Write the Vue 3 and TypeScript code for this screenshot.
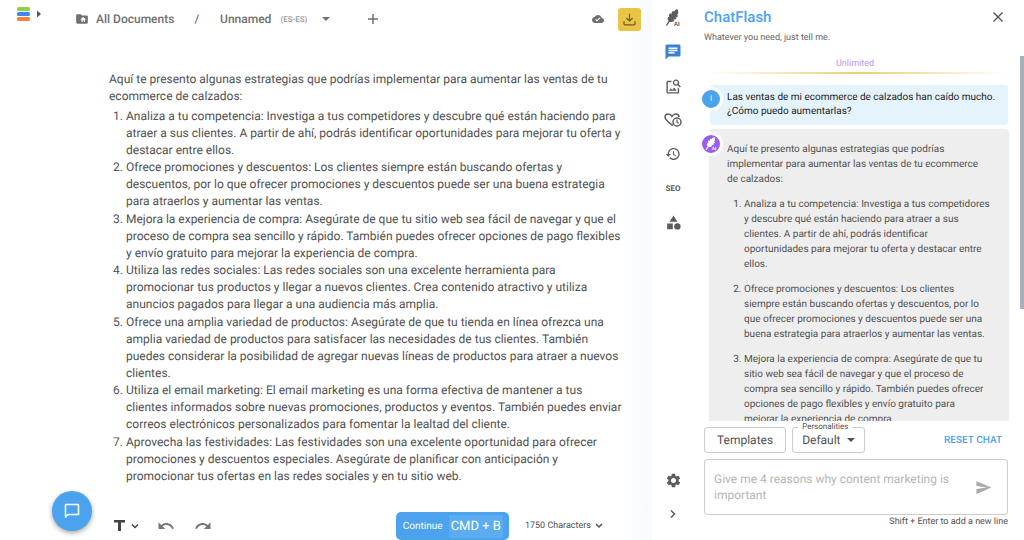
<script setup lang="ts">
import { ref } from 'vue'

const intro = `Aquí te presento algunas estrategias que podrías implementar para aumentar las ventas de tu
ecommerce de calzados:`

const strategies: string[] = [
  `Analiza a tu competencia: Investiga a tus competidores y descubre qué están haciendo para
atraer a sus clientes. A partir de ahí, podrás identificar oportunidades para mejorar tu oferta y
destacar entre ellos.`,
  `Ofrece promociones y descuentos: Los clientes siempre están buscando ofertas y
descuentos, por lo que ofrecer promociones y descuentos puede ser una buena estrategia
para atraerlos y aumentar las ventas.`,
  `Mejora la experiencia de compra: Asegúrate de que tu sitio web sea fácil de navegar y que el
proceso de compra sea sencillo y rápido. También puedes ofrecer opciones de pago flexibles
y envío gratuito para mejorar la experiencia de compra.`,
  `Utiliza las redes sociales: Las redes sociales son una excelente herramienta para
promocionar tus productos y llegar a nuevos clientes. Crea contenido atractivo y utiliza
anuncios pagados para llegar a una audiencia más amplia.`,
  `Ofrece una amplia variedad de productos: Asegúrate de que tu tienda en línea ofrezca una
amplia variedad de productos para satisfacer las necesidades de tus clientes. También
puedes considerar la posibilidad de agregar nuevas líneas de productos para atraer a nuevos
clientes.`,
  `Utiliza el email marketing: El email marketing es una forma efectiva de mantener a tus
clientes informados sobre nuevas promociones, productos y eventos. También puedes enviar
correos electrónicos personalizados para fomentar la lealtad del cliente.`,
  `Aprovecha las festividades: Las festividades son una excelente oportunidad para ofrecer
promociones y descuentos especiales. Asegúrate de planificar con anticipación y
promocionar tus ofertas en las redes sociales y en tu sitio web.`,
]

const question = `Las ventas de mi ecommerce de calzados han caído mucho.
¿Cómo puedo aumentarlas?`

const replyIntro = `Aquí te presento algunas estrategias que podrías
implementar para aumentar las ventas de tu ecommerce
de calzados:`

const replyItems: string[] = [
  `Analiza a tu competencia: Investiga a tus competidores
y descubre qué están haciendo para atraer a sus
clientes. A partir de ahí, podrás identificar
oportunidades para mejorar tu oferta y destacar entre
ellos.`,
  `Ofrece promociones y descuentos: Los clientes
siempre están buscando ofertas y descuentos, por lo
que ofrecer promociones y descuentos puede ser una
buena estrategia para atraerlos y aumentar las ventas.`,
  `Mejora la experiencia de compra: Asegúrate de que tu
sitio web sea fácil de navegar y que el proceso de
compra sea sencillo y rápido. También puedes ofrecer
opciones de pago flexibles y envío gratuito para
mejorar la experiencia de compra.`,
]

const message = ref('')
const personality = ref('Default')
</script>

<template>
  <div class="app">
    <main class="editor">
      <header class="topbar">
        <button class="icon-btn menu" aria-label="Menu">
          <svg width="26" height="14" viewBox="0 0 26 14">
            <rect x="0" y="0" width="13" height="4" rx="1.5" fill="#8bd346" />
            <rect x="0" y="5" width="13" height="4" rx="1.5" fill="#3f86f5" />
            <rect x="0" y="10" width="13" height="4" rx="1.5" fill="#f5813a" />
            <path d="M20 3.500l4 3.500-4 3.500z" fill="#555" />
          </svg>
        </button>
        <a href="#" class="crumb folder">
          <svg width="14" height="14" viewBox="0 0 24 24" fill="currentColor">
            <path fill-rule="evenodd" d="M20 6h-8l-2-2H4c-1.100 0-2 .9-2 2v12c0 1.100.9 2 2 2h16c1.100 0 2-.9 2-2V8c0-1.100-.9-2-2-2zM17 13v4h-2v-3h-2v3h-2v-4H9l5-4.500 5 4.500z" />
          </svg>
          <span>All Documents</span>
        </a>
        <span class="crumb slash">/</span>
        <button class="crumb name">
          <span>Unnamed</span>
          <small>(ES-ES)</small>
          <svg width="8" height="4" viewBox="0 0 8 4" fill="currentColor"><path d="M0 0h8L4 4z" /></svg>
        </button>
        <button class="icon-btn add" aria-label="New document">
          <svg width="12" height="12" viewBox="0 0 12 12" fill="none" stroke="currentColor" stroke-width="1.500"><path d="M6 1v10M1 6h10" /></svg>
        </button>
        <span class="grow"></span>
        <svg class="cloud" width="12" height="12" viewBox="0 0 24 24" fill="currentColor">
          <path d="M19.350 10.040C18.670 6.590 15.640 4 12 4 9.110 4 6.600 5.640 5.350 8.040 2.340 8.360 0 10.910 0 14c0 3.310 2.690 6 6 6h13c2.760 0 5-2.240 5-5 0-2.640-2.050-4.780-4.650-4.960zM10 17l-3.500-3.500 1.410-1.410L10 14.170 15.180 9l1.410 1.410L10 17z" />
        </svg>
        <button class="download" aria-label="Download">
          <svg width="13" height="13" viewBox="0 0 13 13" fill="none" stroke="currentColor" stroke-width="1.200" stroke-linecap="round" stroke-linejoin="round">
            <path d="M6.500 1v7M3.800 5.500l2.700 2.700 2.700-2.700M1 8.500v2.300q0 1 1 1h9q1 0 1-1V8.500" />
          </svg>
        </button>
      </header>

      <article class="document">
        <p>{{ intro }}</p>
        <ol>
          <li v-for="(item, i) in strategies" :key="i">{{ item }}</li>
        </ol>
      </article>

      <footer class="toolbar">
        <button class="icon-btn support" aria-label="Support chat">
          <svg width="16" height="16" viewBox="0 0 16 16" fill="none" stroke="currentColor" stroke-width="1.500" stroke-linejoin="round">
            <path d="M1.500 1.500h13v10H4l-2.500 2.600z" />
          </svg>
        </button>
        <button class="icon-btn type" aria-label="Text style">
          <svg width="26" height="12" viewBox="0 0 26 12">
            <path d="M0 0h11v2.500H7V11H4V2.500H0z" fill="#444" />
            <path d="M18 4.500l3 3 3-3" fill="none" stroke="#444" stroke-width="1.500" />
          </svg>
        </button>
        <button class="icon-btn undo" aria-label="Undo">
          <svg width="18" height="18" viewBox="0 0 24 24" fill="currentColor"><path d="M12.500 8c-2.650 0-5.050.99-6.900 2.600L2 7v9h9l-3.620-3.620c1.390-1.160 3.160-1.880 5.120-1.880 3.540 0 6.550 2.310 7.600 5.500l2.370-.78C21.080 11.030 17.150 8 12.500 8z" /></svg>
        </button>
        <button class="icon-btn redo" aria-label="Redo">
          <svg width="18" height="18" viewBox="0 0 24 24" fill="currentColor"><path d="M18.400 10.600C16.550 8.990 14.150 8 11.500 8c-4.650 0-8.580 3.030-9.960 7.220L3.900 16c1.050-3.190 4.050-5.500 7.600-5.500 1.950 0 3.730.72 5.120 1.880L13 16h9V7l-3.600 3.600z" /></svg>
        </button>
        <button class="continue"><span>Continue</span><kbd>CMD + B</kbd></button>
        <button class="count">
          <span>1750 Characters</span>
          <svg width="8" height="6" viewBox="0 0 8 6" fill="none" stroke="currentColor" stroke-width="1.500"><path d="M1 1l3 3 3-3" /></svg>
        </button>
      </footer>
    </main>

    <nav class="rail" aria-label="Tools">
      <button class="icon-btn" aria-label="AI writer">
        <svg width="16" height="18" viewBox="0 0 16 18">
          <path d="M12.500 0C11 .8 9.500.8 9 2.800L8.200 1.800C6.600 2.800 6.200 4 6.600 5.500L5.200 4.200C3.800 5.500 3.700 7 4.500 8.600L3 7.800C2.300 9.500 2.700 11 3.600 12L1 16.300l1 .7 2.800-4.300c2 .5 3.700 0 4.800-1.500l-1.700-.5c2 .1 3.300-.6 4-1.900L10 8.500c1.900 0 3-.9 3.300-2.200l-1.700.1C13.900 5 13.500 2.500 12.500 0z" fill="currentColor" />
          <text x="9" y="17" class="ai-text">AI</text>
        </svg>
      </button>
      <button class="icon-btn active" aria-label="Chat">
        <svg width="18" height="18" viewBox="0 0 24 24" fill="currentColor"><path d="M20 2H4c-1.100 0-1.990.9-1.990 2L2 22l4-4h14c1.100 0 2-.9 2-2V4c0-1.100-.9-2-2-2zM6 9h12v2H6V9zm8 5H6v-2h8v2zm4-6H6V6h12v2z" /></svg>
      </button>
      <button class="icon-btn" aria-label="Image search">
        <svg width="17" height="17" viewBox="0 0 24 24" fill="currentColor"><path d="M18 13v7H4V6h5.020c.05-.71.22-1.380.48-2H4c-1.100 0-2 .9-2 2v14c0 1.100.9 2 2 2h14c1.100 0 2-.9 2-2v-5l-2-2zm-1.500 5h-11l2.750-3.530 1.960 2.360 2.750-3.540L16.500 18zm2.800-9.110c.44-.7.7-1.510.7-2.390C20 4.010 17.990 2 15.500 2S11 4.010 11 6.500s2.010 4.500 4.490 4.500c.88 0 1.700-.26 2.390-.7L21 13.420 22.420 12 19.300 8.890zM15.500 9C14.120 9 13 7.880 13 6.500S14.120 4 15.500 4 18 5.120 18 6.500 16.880 9 15.500 9z" /></svg>
      </button>
      <button class="icon-btn" aria-label="Saved">
        <svg width="18" height="14" viewBox="0 0 18 14" fill="none" stroke="currentColor" stroke-width="1.500">
          <path d="M8.800 12.500C5 9.800 1 7 1 4.300 1 2.300 2.500 1 4.300 1 6 1 7.300 2 8 3.300 8.800 2 10 1 11.700 1 13.500 1 15 2.300 15 4" />
          <circle cx="13" cy="9" r="4" />
          <path d="M13 6.500V9.300l1.800 1" stroke-width="1.200" />
        </svg>
      </button>
      <button class="icon-btn" aria-label="History">
        <svg width="16" height="16" viewBox="0 0 24 24" fill="currentColor"><path d="M13 3c-4.970 0-9 4.030-9 9H1l3.890 3.890.07.14L9 12H6c0-3.870 3.130-7 7-7s7 3.130 7 7-3.130 7-7 7c-1.930 0-3.680-.79-4.940-2.060l-1.420 1.420C8.270 19.990 10.510 21 13 21c4.970 0 9-4.030 9-9s-4.030-9-9-9zm-1 5v5l4.280 2.540.72-1.210-3.500-2.080V8H12z" /></svg>
      </button>
      <button class="icon-btn seo">SEO</button>
      <button class="icon-btn" aria-label="Categories">
        <svg width="17" height="17" viewBox="0 0 24 24" fill="currentColor"><path d="M12 2l-5.500 9h11zM3 13.500h8v8H3z" /><circle cx="17.500" cy="17.500" r="4.500" /></svg>
      </button>
      <span class="grow"></span>
      <button class="icon-btn" aria-label="Settings">
        <svg width="17" height="17" viewBox="0 0 24 24" fill="currentColor"><path d="M19.140 12.940c.04-.3.06-.61.06-.94 0-.32-.02-.64-.07-.94l2.030-1.580c.18-.14.23-.41.12-.61l-1.920-3.320c-.12-.22-.37-.29-.59-.22l-2.390.96c-.5-.38-1.030-.7-1.620-.94l-.36-2.540c-.04-.24-.24-.41-.48-.41h-3.840c-.24 0-.43.17-.47.41l-.36 2.540c-.59.24-1.130.57-1.620.94l-2.390-.96c-.22-.08-.47 0-.59.22L2.740 8.870c-.12.21-.08.47.12.61l2.030 1.580c-.05.3-.09.63-.09.94s.02.64.07.94l-2.030 1.580c-.18.14-.23.41-.12.61l1.920 3.320c.12.22.37.29.59.22l2.390-.96c.5.38 1.030.7 1.620.94l.36 2.540c.05.24.24.41.48.41h3.840c.24 0 .44-.17.47-.41l.36-2.540c.59-.24 1.130-.56 1.620-.94l2.390.96c.22.08.47 0 .59-.22l1.920-3.320c.12-.22.07-.47-.12-.61l-2.010-1.580zM12 15.600c-1.980 0-3.600-1.620-3.600-3.600s1.620-3.600 3.600-3.600 3.600 1.620 3.600 3.600-1.620 3.600-3.600 3.600z" /></svg>
      </button>
      <button class="icon-btn" aria-label="Collapse">
        <svg width="8" height="10" viewBox="0 0 8 10" fill="none" stroke="currentColor" stroke-width="1.500"><path d="M2 1.500L5.500 5 2 8.500" /></svg>
      </button>
    </nav>

    <aside class="chat">
      <header class="chat-head">
        <div>
          <h1>ChatFlash</h1>
          <p>Whatever you need, just tell me.</p>
        </div>
        <button class="icon-btn close" aria-label="Close">
          <svg width="10" height="10" viewBox="0 0 10 10" fill="none" stroke="currentColor" stroke-width="1.300"><path d="M.5.5l9 9M9.500.5l-9 9" /></svg>
        </button>
      </header>

      <section class="thread">
        <div class="limit">Unlimited</div>
        <div class="bubble mine">
          <span class="avatar">I</span>
          <p>{{ question }}</p>
        </div>
        <div class="bubble reply">
          <span class="avatar">
            <svg width="14" height="14" viewBox="0 0 16 18">
              <path d="M12.500 0C11 .8 9.500.8 9 2.800L8.200 1.800C6.600 2.800 6.200 4 6.600 5.500L5.200 4.200C3.800 5.500 3.700 7 4.500 8.600L3 7.800C2.300 9.500 2.700 11 3.600 12L1 16.300l1 .7 2.800-4.300c2 .5 3.700 0 4.800-1.500l-1.700-.5c2 .1 3.300-.6 4-1.900L10 8.500c1.900 0 3-.9 3.300-2.200l-1.700.1C13.900 5 13.500 2.500 12.500 0z" fill="#fff" />
              <text x="9" y="17" class="ai-text light">AI</text>
            </svg>
          </span>
          <p>{{ replyIntro }}</p>
          <ol>
            <li v-for="(item, i) in replyItems" :key="i">{{ item }}</li>
          </ol>
        </div>
      </section>
      <span class="scrollbar"></span>

      <div class="controls">
        <button class="outlined">Templates</button>
        <div class="picker">
          <label for="personality">Personalities</label>
          <select id="personality" v-model="personality">
            <option>Default</option>
          </select>
          <svg width="8" height="4" viewBox="0 0 8 4" fill="currentColor"><path d="M0 0h8L4 4z" /></svg>
        </div>
        <span class="grow"></span>
        <button class="reset">RESET CHAT</button>
      </div>

      <form class="composer" @submit.prevent>
        <textarea v-model="message" aria-label="Message" placeholder="Give me 4 reasons why content marketing is important"></textarea>
        <button class="icon-btn send" aria-label="Send">
          <svg width="17" height="17" viewBox="0 0 24 24" fill="currentColor"><path d="M2.010 21L23 12 2.010 3 2 10l15 2-15 2z" /></svg>
        </button>
      </form>
      <p class="hint">Shift + Enter to add a new line</p>
    </aside>
  </div>
</template>

<style>
body {
  margin: 0;
  background: #fff;
}
</style>

<style scoped>
.app {
  display: grid;
  grid-template-columns: minmax(0, 1fr) 42px 330px;
  grid-template-rows: minmax(0, 1fr);
  height: 100vh;
  overflow: hidden;
  font-family: Roboto, "Liberation Sans", sans-serif;
  font-size: 12px;
  text-rendering: geometricPrecision;
  color: #505050;
  background: #fff;
}
.app * {
  box-sizing: border-box;
}
p,
ol,
h1 {
  margin: 0;
  padding: 0;
}
button,
select,
textarea {
  font: inherit;
  text-rendering: inherit;
  color: inherit;
  border: 0;
  padding: 0;
  margin: 0;
  background: none;
}
svg {
  display: block;
}
.grow {
  flex: 1;
}
.icon-btn {
  display: flex;
  align-items: center;
  justify-content: center;
}

/* Editor */
.editor {
  display: flex;
  flex-direction: column;
  min-width: 0;
  background: linear-gradient(to left, #f8faff 0, #fcfdff 20px, #fff 36px);
}
.topbar {
  display: flex;
  align-items: center;
  height: 38px;
  flex: none;
  padding: 0 11px 0 17px;
  font-weight: 500;
  color: #707070;
}
.menu {
  margin-bottom: 10px;
}
.crumb {
  display: flex;
  align-items: center;
  color: inherit;
  text-decoration: none;
  font-weight: 500;
}
.folder {
  margin-left: 32px;
  gap: 7px;
}
.slash {
  margin: 0 21px 0 20px;
}
.name small {
  margin: 0 15px 0 9px;
  font-size: 8px;
  color: #999;
}
.add {
  margin-left: 37px;
}
.cloud {
  margin-right: 14px;
}
.download {
  display: flex;
  align-items: center;
  justify-content: center;
  width: 23px;
  height: 23px;
  border-radius: 3px;
  background: #e8c547;
  color: #6d5c1f;
}
.document {
  flex: 1;
  min-height: 0;
  padding: 33px 24px 0 109px;
  line-height: 17px;
  white-space: pre-line;
}
.document ol {
  margin-top: 3px;
  padding-left: 17px;
}
.document li:nth-child(even) {
  margin-bottom: 1px;
}
.toolbar {
  display: flex;
  align-items: center;
  height: 57px;
  flex: none;
  padding: 29px 49px 0 52px;
}
.support {
  width: 40px;
  height: 40px;
  align-self: flex-end;
  margin-bottom: 9px;
  flex: none;
  border-radius: 50%;
  background: #4ba3ee;
  color: #fff;
  box-shadow: 0 2px 5px rgba(0, 0, 0, 0.35);
}
.type {
  margin-left: 22px;
}
.undo {
  margin-left: 17px;
  color: #777;
}
.redo {
  margin-left: 19px;
  color: #777;
}
.continue {
  display: flex;
  align-items: center;
  height: 28px;
  margin-left: auto;
  padding: 0 6px 0 7px;
  gap: 6px;
  border-radius: 5px;
  background: #4ba3ee;
  color: #fff;
  font-size: 10px;
}
.continue kbd {
  padding: 3px 2px;
  font-family: inherit;
  font-size: 13px;
  line-height: 17px;
  background: #5bacf0;
}
.count {
  display: flex;
  align-items: center;
  gap: 4px;
  margin-left: 16px;
  font-size: 9px;
}

/* Rail */
.rail {
  display: flex;
  flex-direction: column;
  align-items: center;
  padding: 9px 0 17px;
  color: #5c5c5c;
}
.rail .icon-btn {
  width: 34px;
  height: 18px;
  margin-bottom: 16px;
}
.rail .icon-btn:last-child {
  margin-bottom: 0;
}
.rail .active {
  color: #3a82cf;
}
.rail .seo {
  font-size: 8px;
  font-weight: 700;
}
.ai-text {
  font-size: 6px;
  font-weight: 700;
  fill: currentColor;
}
.light {
  fill: #fff;
}

/* Chat */
.chat {
  position: relative;
  display: flex;
  flex-direction: column;
  min-width: 0;
  padding-bottom: 12px;
}
.chat-head {
  display: flex;
  justify-content: space-between;
  align-items: flex-start;
  height: 57px;
  flex: none;
  padding: 8px 21px 0 10px;
}
.chat-head h1 {
  font-size: 15px;
  line-height: 18px;
  font-weight: 500;
  color: #4ba3ee;
}
.chat-head p {
  margin-top: 6px;
  font-size: 9px;
  line-height: 12px;
  color: #666;
}
.close {
  margin-top: 4px;
}
.thread {
  flex: 1;
  min-height: 0;
  overflow: hidden;
  padding: 0 16px;
  font-size: 10px;
}
.limit {
  height: 17px;
  margin-bottom: 11px;
  padding-right: 8px;
  font-size: 9px;
  line-height: 14px;
  text-align: center;
  color: #bd93f5;
  border-bottom: 2px solid;
  border-image: linear-gradient(to right, #fff, #ecce75 50%, #fff) 1;
}
.bubble {
  position: relative;
  padding-left: 17px;
  border-radius: 3px;
  white-space: pre-line;
}
.mine {
  padding-top: 6px;
  height: 40px;
  line-height: 14px;
  background: #e5f3fd;
  color: #222;
}
.reply {
  margin-top: 5px;
  padding-top: 12px;
  line-height: 15px;
  background: #eee;
  box-shadow: 0 0 2px rgba(0, 0, 0, 0.25);
}
.reply ol {
  padding-left: 17px;
}
.reply li {
  margin-top: 10px;
}
.avatar {
  position: absolute;
  left: -11px;
  top: 2px;
  display: flex;
  align-items: center;
  justify-content: center;
  width: 24px;
  height: 24px;
  border: 3px solid #fff;
  border-radius: 50%;
  background: #4ba3ee;
  color: #fff;
  font-size: 8px;
}
.reply .avatar {
  background: #9b5cf5;
}
.scrollbar {
  position: absolute;
  top: 56px;
  right: 0;
  width: 4px;
  height: 253px;
  background: #a7b1ba;
}
.controls {
  display: flex;
  align-items: center;
  flex: none;
  margin: 6px 22px 6px 10px;
}
.outlined {
  height: 26px;
  padding: 0 12px;
  border: 1px solid #ccc;
  border-radius: 3px;
}
.picker {
  position: relative;
  display: flex;
  align-items: center;
  height: 26px;
  margin-left: 6px;
  padding: 0 9px;
  border: 1px solid #ccc;
  border-radius: 3px;
}
.picker label {
  position: absolute;
  top: -7px;
  left: 5px;
  padding: 0 4px;
  font-size: 8px;
  line-height: 12px;
  background: #fff;
}
.picker select {
  appearance: none;
  margin-right: 6px;
}
.reset {
  font-size: 10px;
  font-weight: 500;
  color: #4ba3ee;
}
.composer {
  display: flex;
  align-items: center;
  flex: none;
  height: 56px;
  margin: 0 16px 0 10px;
  padding: 0 15px 0 9px;
  border: 1px solid #ccc;
  border-radius: 3px;
}
.composer textarea {
  flex: 1;
  min-width: 0;
  height: 32px;
  margin-right: 20px;
  line-height: 16px;
  resize: none;
  overflow: hidden;
}
.composer textarea::placeholder {
  color: #b5b5b5;
}
.send {
  color: #aaa;
}
.hint {
  margin: 1px 16px 0 0;
  font-size: 9px;
  line-height: 12px;
  text-align: right;
}
</style>
